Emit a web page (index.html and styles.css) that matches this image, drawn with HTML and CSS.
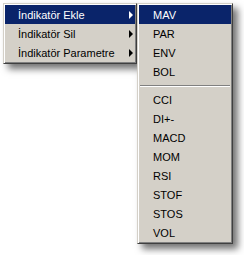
FILE: index.html
```html
<!DOCTYPE html>
<html>
<head>
<meta charset="utf-8">
<link rel="stylesheet" href="styles.css">
</head>
<body>
<div class="stage">
  <div class="menu main">
    <div class="item active"><span>İndikatör Ekle</span><i class="arrow"></i></div>
    <div class="item"><span>İndikatör Sil</span><i class="arrow"></i></div>
    <div class="item"><span>İndikatör Parametre</span><i class="arrow"></i></div>
  </div>
  <div class="menu sub">
    <div class="item active"><span>MAV</span></div>
    <div class="item"><span>PAR</span></div>
    <div class="item"><span>ENV</span></div>
    <div class="item"><span>BOL</span></div>
    <div class="sep"></div>
    <div class="item"><span>CCI</span></div>
    <div class="item"><span>DI+-</span></div>
    <div class="item"><span>MACD</span></div>
    <div class="item"><span>MOM</span></div>
    <div class="item"><span>RSI</span></div>
    <div class="item"><span>STOF</span></div>
    <div class="item"><span>STOS</span></div>
    <div class="item"><span>VOL</span></div>
  </div>
</div>
</body>
</html>
```

FILE: styles.css
```css
html, body {
  margin: 0;
  padding: 0;
  background: #ffffff;
}
body {
  width: 244px;
  height: 255px;
  overflow: hidden;
  font-family: "Liberation Sans", Arial, sans-serif;
  font-size: 11px;
  color: #000;
}
.stage {
  display: flex;
  align-items: flex-start;
  padding: 3px 0 0 3px;
}
.menu {
  box-sizing: border-box;
  background: #d4d0c8;
  border: 1px solid;
  border-color: #d4d0c8 #404040 #404040 #d4d0c8;
  padding: 1px;
  box-shadow: inset 1px 1px 0 #ffffff, inset -1px -1px 0 #808080, 5px 5px 7px rgba(0, 0, 0, 0.55);
}
.main {
  width: 134px;
}
.sub {
  width: 96px;
}
.item {
  height: 19px;
  display: flex;
  align-items: center;
  justify-content: space-between;
  white-space: nowrap;
}
.item span {
  padding-top: 1px;
}
.main .item {
  padding: 0 2px 0 13px;
}
.sub .item {
  padding: 0 2px 0 14px;
}
.item.active {
  background: #0a246a;
  color: #ffffff;
}
.arrow {
  width: 0;
  height: 0;
  border-left: 4px solid currentColor;
  border-top: 4px solid transparent;
  border-bottom: 4px solid transparent;
}
.sep {
  height: 9px;
  display: flex;
  flex-direction: column;
  justify-content: center;
  padding: 0 1px;
}
.sep::before {
  content: "";
  display: block;
  height: 1px;
  background: #808080;
  border-bottom: 1px solid #ffffff;
}
```
